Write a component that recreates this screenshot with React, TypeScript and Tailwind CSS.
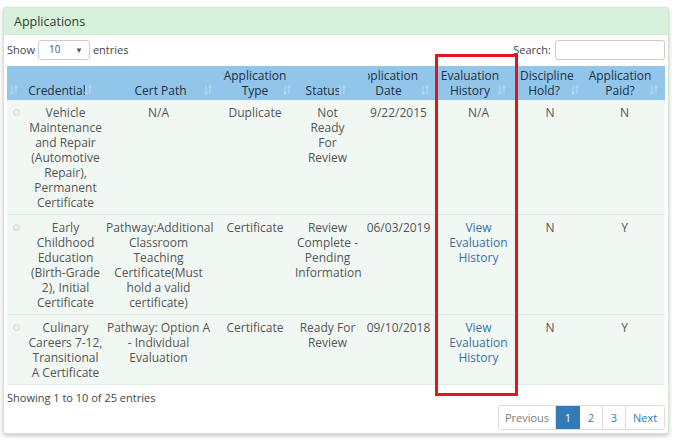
import React from "react";

type Col = {
  width: string;
  head: string[];
  headClass: string;
  iconClass: string;
};

const cols: Col[] = [
  { width: "w-[18px]", head: [], headClass: "", iconClass: "left-[3px]" },
  { width: "w-[81px]", head: ["Credential"], headClass: "pr-[17px]", iconClass: "right-[14px]" },
  { width: "w-[109px]", head: ["Cert Path"], headClass: "", iconClass: "right-[3px]" },
  { width: "w-[80px]", head: ["Application", "Type"], headClass: "", iconClass: "right-[4px]" },
  { width: "w-[65px]", head: ["Status"], headClass: "pr-[9px]", iconClass: "right-[14px]" },
  { width: "w-[77px]", head: ["Application", "Date"], headClass: "", iconClass: "right-[8px]" },
  { width: "w-[83px]", head: ["Evaluation", "History"], headClass: "pr-[17px]", iconClass: "right-[14px]" },
  { width: "w-[60px]", head: ["Discipline", "Hold?"], headClass: "pr-[12px]", iconClass: "right-[1px]" },
  { width: "w-[85px]", head: ["Application", "Paid?"], headClass: "pr-[5px]", iconClass: "right-[7px]" },
];

type Row = {
  credential: string[];
  certPath: string[];
  type: string;
  status: string[];
  date: string;
  evalLink: boolean;
  hold: string;
  paid: string;
};

const rows: Row[] = [
  {
    credential: ["Vehicle", "Maintenance", "and Repair", "(Automotive", "Repair),", "Permanent", "Certificate"],
    certPath: ["N/A"],
    type: "Duplicate",
    status: ["Not", "Ready", "For", "Review"],
    date: "9/22/2015",
    evalLink: false,
    hold: "N",
    paid: "N",
  },
  {
    credential: ["Early", "Childhood", "Education", "(Birth-Grade", "2), Initial", "Certificate"],
    certPath: ["Pathway:Additional", "Classroom", "Teaching", "Certificate(Must", "hold a valid", "certificate)"],
    type: "Certificate",
    status: ["Review", "Complete -", "Pending", "Information"],
    date: "06/03/2019",
    evalLink: true,
    hold: "N",
    paid: "Y",
  },
  {
    credential: ["Culinary", "Careers 7-12,", "Transitional", "A Certificate"],
    certPath: ["Pathway: Option A", "- Individual", "Evaluation"],
    type: "Certificate",
    status: ["Ready For", "Review"],
    date: "09/10/2018",
    evalLink: true,
    hold: "N",
    paid: "Y",
  },
];

function SortIcon({ className }: { className: string }) {
  return (
    <svg className={`absolute bottom-[5px] ${className}`} width="8" height="10" viewBox="0 0 8 10" fill="none">
      <path d="M2 0.5V9M0.5 7.3L2 9.2L3.5 7.3" stroke="#b9d6ee" strokeWidth="1.1" />
      <path d="M6 9.5V1M4.5 2.7L6 0.8L7.5 2.7" stroke="#b9d6ee" strokeWidth="1.1" />
    </svg>
  );
}

function Lines({ lines }: { lines: string[] }) {
  return (
    <>
      {lines.map((l, i) => (
        <div key={i} className="whitespace-nowrap">
          {l}
        </div>
      ))}
    </>
  );
}

export default function App() {
  return (
    <div className="relative w-[675px] h-[443px] pt-[7px] pl-[3px] bg-white font-['Open_Sans',sans-serif] text-[12px] leading-[15px] text-[#555]">
      <div className="w-[666px] h-[427px] border border-[#cfe8d5] rounded-[3px] bg-white shadow-[0_2px_4px_rgba(0,0,0,0.22)] flex flex-col">
        {/* panel heading */}
        <div className="h-[27px] bg-[#d8f1dc] border-b border-[#cae6d0] pl-[10px] flex items-center text-[12.5px] text-[#2f3e33]">
          Applications
        </div>

        <div className="px-[3px] flex flex-col flex-1">
          {/* length + search */}
          <div className="mt-[4px] h-[21px] flex items-center justify-between text-[11px] text-[#444]">
            <div className="flex items-center gap-[3px]">
              <span>Show</span>
              <div className="w-[52px] h-[20px] border border-[#ccc] rounded-[3px] flex items-center justify-between pl-[10px] pr-[6px] text-[10px] text-[#555]">
                <span>10</span>
                <span className="text-[8px]">▼</span>
              </div>
              <span>entries</span>
            </div>
            <div className="flex items-center gap-[4px]">
              <span>Search:</span>
              <div className="w-[110px] h-[20px] border border-[#ccc] rounded-[3px] bg-white" />
            </div>
          </div>

          {/* table */}
          <table className="mt-[6px] w-[658px] table-fixed border-collapse">
            <colgroup>
              {cols.map((c, i) => (
                <col key={i} className={c.width} />
              ))}
            </colgroup>
            <thead>
              <tr className="bg-[#92c5ea] h-[34px]">
                {cols.map((c, i) => (
                  <th key={i} className={`relative align-bottom font-normal text-center text-[#1d3044] pb-[2px] ${c.headClass}`}>
                    {i === 5 ? (
                      <>
                        <div className="ml-[8px] mr-[19px] flex justify-end overflow-hidden whitespace-nowrap">
                          <span>Application</span>
                        </div>
                        <div className="pr-[20px]">Date</div>
                      </>
                    ) : (
                      <Lines lines={c.head} />
                    )}
                    <SortIcon className={c.iconClass} />
                  </th>
                ))}
              </tr>
            </thead>
            <tbody>
              {rows.map((r, i) => (
                <tr key={i} className="bg-[#f1f8f3] border-b border-[#deece2] align-top text-center">
                  <td className="pt-[9px] pb-[4px]">
                    <div className="mx-auto w-[7px] h-[7px] rounded-full border border-[#d6d6d6] bg-[#eee]" />
                  </td>
                  <td className="pt-[5px] pb-[4px]">
                    <Lines lines={r.credential} />
                  </td>
                  <td className="pt-[5px] pb-[4px] pr-[4px]">
                    <Lines lines={r.certPath} />
                  </td>
                  <td className="pt-[5px] pb-[4px]">{r.type}</td>
                  <td className="pt-[5px] pb-[4px]">
                    <Lines lines={r.status} />
                  </td>
                  <td className="pt-[5px] pb-[4px]">{r.date}</td>
                  <td className="pt-[5px] pb-[4px]">
                    {r.evalLink ? (
                      <div className="text-[#3c6fa5]">
                        <Lines lines={["View", "Evaluation", "History"]} />
                      </div>
                    ) : (
                      "N/A"
                    )}
                  </td>
                  <td className="pt-[5px] pb-[4px]">{r.hold}</td>
                  <td className="pt-[5px] pb-[4px] pl-[4px]">{r.paid}</td>
                </tr>
              ))}
            </tbody>
          </table>

          {/* footer */}
          <div className="mt-[5px] text-[11px] text-[#444]">Showing 1 to 10 of 25 entries</div>
          <div className="flex justify-end">
            <div className="flex h-[25px] border border-[#ddd] rounded-[3px] text-[11px] overflow-hidden">
              <div className="w-[57px] flex items-center justify-center text-[#7a7a7a] border-r border-[#ddd]">Previous</div>
              <div className="w-[24px] flex items-center justify-center bg-[#337ab7] text-white">1</div>
              <div className="w-[23px] flex items-center justify-center text-[#337ab7] border-r border-[#ddd]">2</div>
              <div className="w-[23px] flex items-center justify-center text-[#337ab7] border-r border-[#ddd]">3</div>
              <div className="w-[38px] flex items-center justify-center text-[#337ab7]">Next</div>
            </div>
          </div>
        </div>
      </div>

      {/* highlight box */}
      <div className="absolute left-[435px] top-[54px] w-[83px] h-[342px] border-[3px] border-[#e2141c]" />
    </div>
  );
}
